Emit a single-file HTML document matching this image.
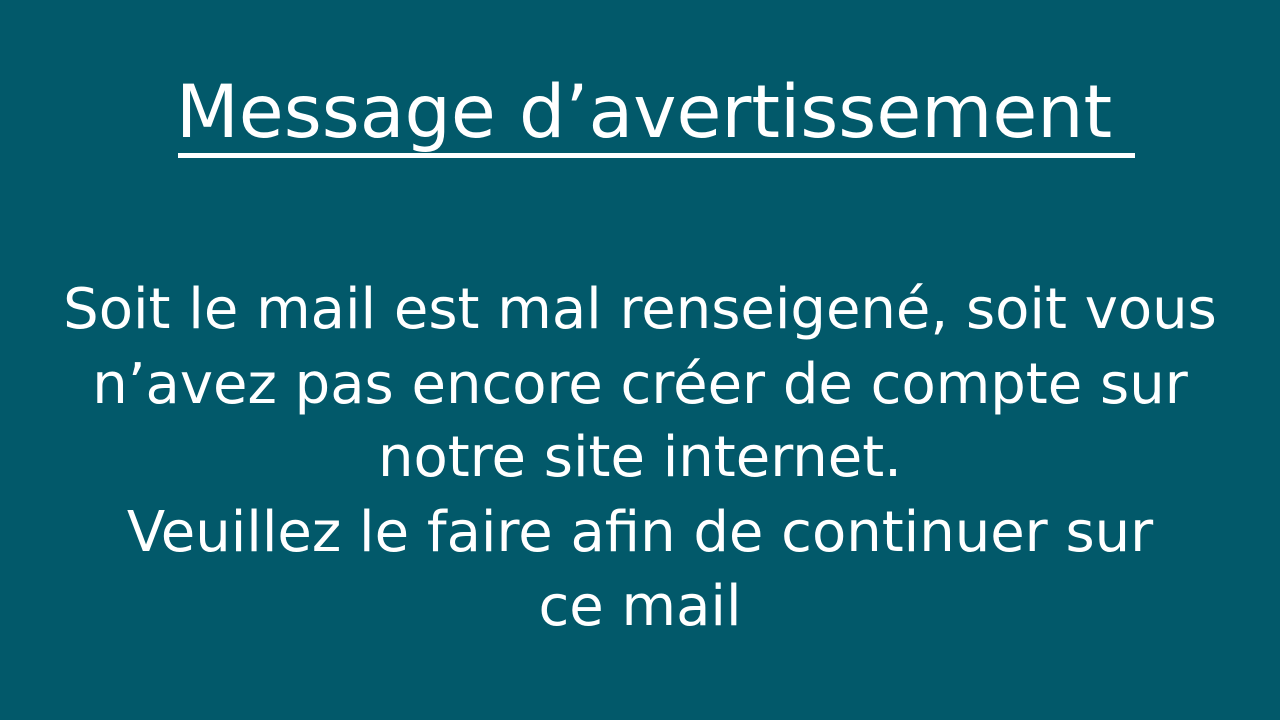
<!DOCTYPE html>
<html><head><meta charset="utf-8"><style>
html,body{margin:0;padding:0}
body{width:1280px;height:720px;background:#02596a;color:#fff;font-family:"DejaVu Sans","Liberation Sans",sans-serif;position:relative;overflow:hidden}
.t{position:absolute;left:0;width:1280px;text-align:center;white-space:nowrap}
.title{top:68px;left:4px;font-size:73px;line-height:90px}
.ul{position:absolute;left:178px;top:153px;width:957px;height:5px;background:#fff}
.b{font-size:56px;line-height:74px}
</style></head><body>
<div class="t title">Message d’avertissement</div>
<div class="ul"></div>
<div class="t b" style="top:273px">Soit le mail est mal renseigené, soit vous</div>
<div class="t b" style="top:348px">n’avez pas encore créer de compte sur</div>
<div class="t b" style="top:421px">notre site internet.</div>
<div class="t b" style="top:496px">Veuillez le faire afin de continuer sur</div>
<div class="t b" style="top:570px">ce mail</div>
</body></html>
